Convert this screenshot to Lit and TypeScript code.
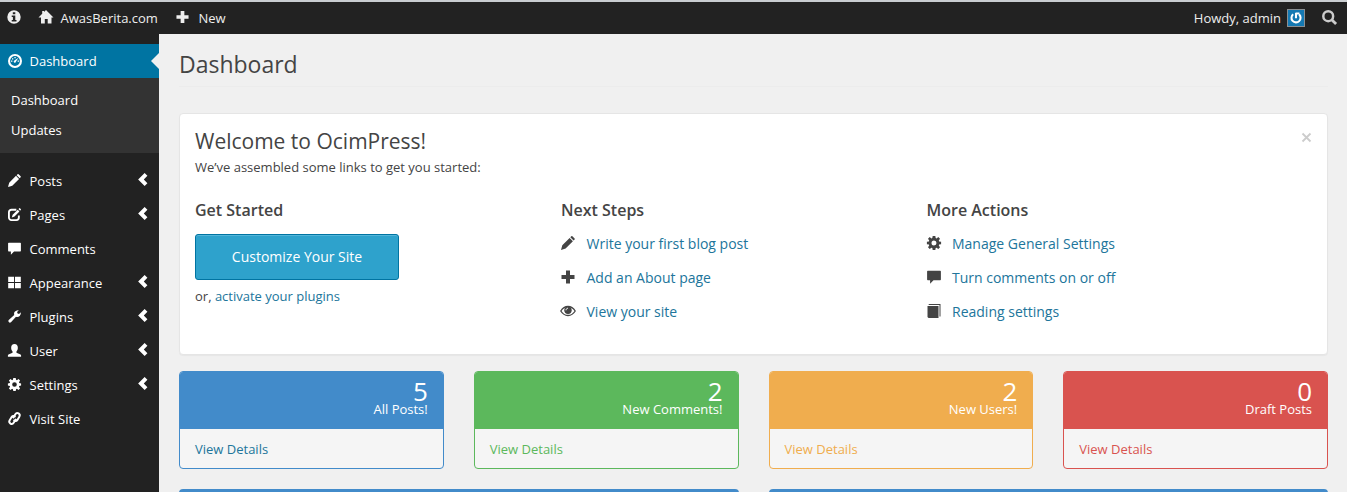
import { LitElement, html, css, svg } from "lit";
import { customElement, property } from "lit/decorators.js";

const glyphs: Record<string, unknown> = {
  info: svg`<path fill-rule="evenodd" d="M7 .3a6.700 6.700 0 1 0 0 13.400A6.700 6.700 0 0 0 7 .3zM5.800 2.300h2.500v2H5.800zM4.700 5.400h3.600v4.500h1.200v1.500h-4.800v-1.500h1.200v-3h-1.200z"/>`,
  home: svg`<path d="M7 0 14.500 7.500H12.500V13.500H8.700V9H5.800V13.500H2V7.500H-.5L3.200 3.800V1H5v1z"/>`,
  plus: svg`<path d="M5 .5h4V5h4.500v4H9v4.500H5V9H.5V5H5z"/>`,
  dashboard: svg`<path fill-rule="evenodd" d="M7 0a7 7 0 1 0 0 14A7 7 0 0 0 7 0zm0 2.100a4.900 4.900 0 1 1 0 9.800a4.900 4.900 0 0 1 0-9.800z"/><path d="M10.400 3.700 7.900 7.700a1.100 1.100 0 1 1-1.500-1.100zM3 6.500h1.400v1.300H3zM4 4.200h1.300v1.300H4zM6.400 2.900h1.300v1.300H6.400zM9.600 6.500H11v1.300H9.600z"/>`,
  pencil: svg`<path d="m11.400.3 2.200 2.200a.8.800 0 0 1 0 1.100l-1 1L9.300 1.300l1-1a.8.800 0 0 1 1.100 0zM8.600 2l3.300 3.300-7.300 7.300L0 14l1.300-4.700z"/>`,
  edit: svg`<path d="M9 1.900H3.700A2.700 2.700 0 0 0 1 4.600v5.700A2.700 2.700 0 0 0 3.700 13H9a2.700 2.700 0 0 0 2.700-2.700V8" fill="none" stroke="currentColor" stroke-width="2"/><path d="m10.500 1.900 1.800 1.800L7 9.200l-2.900.9.900-2.700zM11.300 1.200l.9-.9a.5.500 0 0 1 .7 0l1 1a.5.500 0 0 1 0 .7l-.9.900z"/>`,
  comment: svg`<path d="M.8.7h12.400a.7.700 0 0 1 .7.700v8.100a.7.700 0 0 1-.7.700H6.500L3.100 13.700v-3.500H.8a.7.700 0 0 1-.7-.7V1.400A.7.700 0 0 1 .8.700z"/>`,
  large: svg`<path d="M.2.700h6.300v5.800H.2zM7.500.7h6.300v5.800H7.500zM.2 7.500h6.300v5.800H.2zM7.500 7.500h6.300v5.800H7.500z"/>`,
  wrench: svg`<path d="M9.600.5a4 4 0 0 1 2-.2L9.800 2.200l.5 1.600 1.600.4 1.800-1.800a4 4 0 0 1-5.100 4.900L3.200 13.100a1.700 1.700 0 0 1-2.400-2.400L6.700 5.400a4 4 0 0 1 2.900-4.900z"/>`,
  user: svg`<path d="M7 0c2.300 0 3.700 1.500 3.600 4 0 1.900-.7 3.100-1.500 4.100v1.200l4.400 1.900q.6.400.6 1.200v1.300H-.1v-1.300q0-.8.600-1.200l4.400-1.900V8.100c-.8-1-1.500-2.200-1.500-4.100C3.300 1.500 4.700 0 7 0z"/>`,
  cog: svg`<path fill-rule="evenodd" d="M5.700 0h2.600l.4 2 .9.400L11.300 1.100l1.700 1.700-1.200 1.700.3.900 2 .4v2.400l-2 .4-.3.900 1.200 1.700-1.700 1.700-1.700-1.200-.9.400-.4 2H5.700l-.4-2-.9-.4-1.700 1.200L1 11.200l1.200-1.700-.3-.9-2-.4V5.800l2-.4.3-.9L1 2.800l1.700-1.700 1.700 1.300.9-.4zM7 4.500a2.500 2.500 0 1 0 0 5 2.500 2.500 0 0 0 0-5z"/>`,
  link: svg`<g fill="none" stroke="currentColor" stroke-width="2.100" stroke-linecap="round"><path d="M5.800 5.800 7.900 2.400a2.500 2.500 0 0 1 4.300 2.600L10.100 8.500a2.500 2.500 0 0 1-3.500.8M8.200 8.200 6.100 11.600a2.500 2.500 0 0 1-4.300-2.600L3.900 5.500a2.500 2.500 0 0 1 3.500-.8"/></g>`,
  left: svg`<path d="M9.300 0 12.300 3 8.400 7l3.900 4-3 3L2.300 7z"/>`,
  search: svg`<circle cx="5.800" cy="5.800" r="4.600" fill="none" stroke="currentColor" stroke-width="2.300"/><path d="m8.400 10.200 1.800-1.800 3.900 3.800-1.900 1.900z"/>`,
  eye: svg`<path d="M-.2 7C1.500 4.200 4 2.500 7 2.500S12.500 4.200 14.200 7C12.500 9.800 10 11.500 7 11.500S1.500 9.800-.2 7z" fill="none" stroke="currentColor" stroke-width="1.300"/><circle cx="7" cy="6.200" r="3.700"/><path d="M5 6.300C5 5.100 5.800 4.300 7 4.200" fill="none" stroke="#fff" stroke-width="1"/>`,
  book: svg`<path d="M2.200 0H13.500v12.500h-1V1H1.200zM.5 2h11v12H1.500l-1-1z"/>`,
  power: svg`<path d="M3.700 2.700A5.300 5.300 0 1 0 10.700 3M7 .8v6.400M7 1.800h4" fill="none" stroke="currentColor" stroke-width="2.400"/>`,
};

@customElement("glyph-icon")
class GlyphIcon extends LitElement {
  @property() name = "";
  static styles = css`
    :host { display: block; flex: none; width: 14px; height: 14px; }
    svg { display: block; width: 100%; height: 100%; overflow: visible; fill: currentColor; }
  `;
  render() {
    return html`<svg viewBox="0 0 14 14" aria-hidden="true">${glyphs[this.name]}</svg>`;
  }
}

const menu: [string, string, boolean][] = [
  ["pencil", "Posts", true],
  ["edit", "Pages", true],
  ["comment", "Comments", false],
  ["large", "Appearance", true],
  ["wrench", "Plugins", true],
  ["user", "User", true],
  ["cog", "Settings", true],
  ["link", "Visit Site", false],
];

const groups: [string, [string, string][]][] = [
  ["Next Steps", [["pencil", "Write your first blog post"], ["plus", "Add an About page"], ["eye", "View your site"]]],
  ["More Actions", [["cog", "Manage General Settings"], ["comment", "Turn comments on or off"], ["book", "Reading settings"]]],
];

const stats: [string, string, string][] = [
  ["blue", "5", "All Posts!"],
  ["green", "2", "New Comments!"],
  ["orange", "2", "New Users!"],
  ["red", "0", "Draft Posts"],
];

@customElement("app-root")
class AppRoot extends LitElement {
  static styles = css`
    :host {
      display: block; height: 492px; overflow: hidden; background: #f0f0f0;
      font: 13px/20px "Open Sans", "Noto Sans", sans-serif; color: #444;
    }
    * { box-sizing: border-box; }
    h1, h2, h3, p { margin: 0; font-weight: 400; }
    .top {
      display: flex; align-items: center; height: 34px; padding: 0 10px 1px 7px;
      background: #222; color: #eee; border-top: 2px solid #c9cdd0;
    }
    .top > glyph-icon { margin-bottom: 2px; }
    .top .home { margin-left: 18px; margin-right: 7.500px; width: 14px; }
    .top .add { margin-left: 18.500px; margin-right: 9px; width: 13px; }
    .howdy { margin-left: auto; }
    .avatar {
      width: 18px; height: 18px; margin: 0 17px 0 6px; padding: 2px;
      border: 1px solid #8a8f93; background: #1579b3; color: #fff;
    }
    .avatar glyph-icon { width: 12px; height: 12px; }
    .top .find { width: 15px; height: 15px; margin-bottom: 0; color: #ccc; }
    .body { display: flex; height: 458px; }
    nav { width: 159px; flex: none; padding-top: 10px; background: #222; color: #fff; }
    .item { display: flex; align-items: center; height: 34px; padding: 0 8px; gap: 8px; }
    .item glyph-icon { width: 13px; height: 13px; margin-bottom: 1px; }
    .item .arrow { width: 13px; height: 13px; margin: -3px 2px 0 auto; }
    .item span { padding-left: .5px; }
    .current { position: relative; background: #0074a2; }
    .current glyph-icon { width: 14px; height: 14px; margin-right: -1px; }
    .current::after {
      content: ""; position: absolute; right: 0; top: 9px;
      border: 8px solid transparent; border-right-color: #f0f0f0; border-left: 0;
    }
    .sub { height: 75px; margin-bottom: 11px; padding: 7px 11px; background: #333; }
    .sub div { line-height: 30px; }
    main { flex: 1; padding: 0 19px 0 20px; min-width: 0; }
    h1 { height: 53px; padding-top: 14px; font-size: 23px; line-height: 32px; border-bottom: 1px solid #ececec; }
    .welcome {
      display: flex; flex-direction: column; height: 242px; margin-top: 26px; padding: 15px;
      background: #fff; border: 1px solid #e5e5e5; border-radius: 4px; box-shadow: 0 1px 1px rgba(0,0,0,.04);
    }
    .head { display: flex; justify-content: space-between; }
    h2 { font-size: 21px; line-height: 24px; }
    .close { color: #ccc; width: 11px; height: 11px; margin: 3px 0 0; }
    .intro { line-height: 18px; margin-top: 5px; }
    .cols { display: grid; grid-template-columns: 366px 365.500px 1fr; margin-top: 22px; }
    h3 { font-size: 16px; line-height: 24px; font-weight: 600; }
    .button {
      display: flex; align-items: center; justify-content: center; width: 204px; height: 46px; margin: 12px 0 6px;
      border: 1px solid #0074a2; border-radius: 3px; background: #2ea2cc; color: #fff; font-size: 14px;
      box-shadow: inset 0 1px 0 rgba(120,200,230,.5);
    }
    .link { color: #21759b; }
    .row { display: flex; align-items: center; gap: 11.500px; height: 34px; font-size: 14px; }
    .row:first-of-type { margin-top: 5px; }
    .row glyph-icon { width: 14px; height: 14px; margin-bottom: 2px; }
    .stats { display: grid; grid-template-columns: repeat(4, 1fr); gap: 30px; margin-top: 16px; }
    .stat { height: 98px; border: 1px solid var(--tone); border-radius: 4px; background: #f5f5f5; overflow: hidden; }
    .blue { --tone: #428bca; --ink: #21759b; }
    .green { --tone: #5cb85c; --ink: #5cb85c; }
    .orange { --tone: #f0ad4e; --ink: #f0ad4e; }
    .red { --tone: #d9534f; --ink: #d9534f; }
    .count { height: 57px; padding: 9px 15px 0; background: var(--tone); color: #fff; text-align: right; }
    .number { font-size: 26px; line-height: 20px; }
    .label { line-height: 16px; }
    .details { padding: 10px 15px; color: var(--ink); }
    .more { display: grid; grid-template-columns: 1fr 1fr; gap: 30px; margin-top: 20px; }
    .more div { height: 40px; border-radius: 4px; background: #428bca; }
  `;
  render() {
    return html`
      <header class="top">
        <glyph-icon name="info"></glyph-icon>
        <glyph-icon class="home" name="home"></glyph-icon><span>AwasBerita.com</span>
        <glyph-icon class="add" name="plus"></glyph-icon><span>New</span>
        <span class="howdy">Howdy, admin</span>
        <div class="avatar"><glyph-icon name="power"></glyph-icon></div>
        <glyph-icon class="find" name="search"></glyph-icon>
      </header>
      <div class="body">
        <nav>
          <div class="item current"><glyph-icon name="dashboard"></glyph-icon><span>Dashboard</span></div>
          <div class="sub"><div>Dashboard</div><div>Updates</div></div>
          ${menu.map(([icon, label, open]) => html`
            <div class="item"><glyph-icon name=${icon}></glyph-icon><span>${label}</span>
              ${open ? html`<glyph-icon class="arrow" name="left"></glyph-icon>` : ""}</div>`)}
        </nav>
        <main>
          <h1>Dashboard</h1>
          <section class="welcome">
            <div class="head"><h2>Welcome to OcimPress!</h2>
              <svg class="close" viewBox="0 0 11 11"><path d="m1.500 1.500 8 8m0-8-8 8" stroke="currentColor" stroke-width="1.800"/></svg>
            </div>
            <p class="intro">We’ve assembled some links to get you started:</p>
            <div class="cols">
              <div><h3>Get Started</h3><div class="button">Customize Your Site</div>
                <p>or, <span class="link">activate your plugins</span></p></div>
              ${groups.map(([title, rows]) => html`<div><h3>${title}</h3>
                ${rows.map(([icon, label]) => html`<div class="row"><glyph-icon name=${icon}></glyph-icon><span class="link">${label}</span></div>`)}</div>`)}
            </div>
          </section>
          <section class="stats">
            ${stats.map(([tone, number, label]) => html`<div class="stat ${tone}">
              <div class="count"><div class="number">${number}</div><div class="label">${label}</div></div>
              <div class="details">View Details</div></div>`)}
          </section>
          <section class="more"><div></div><div></div></section>
        </main>
      </div>`;
  }
}
